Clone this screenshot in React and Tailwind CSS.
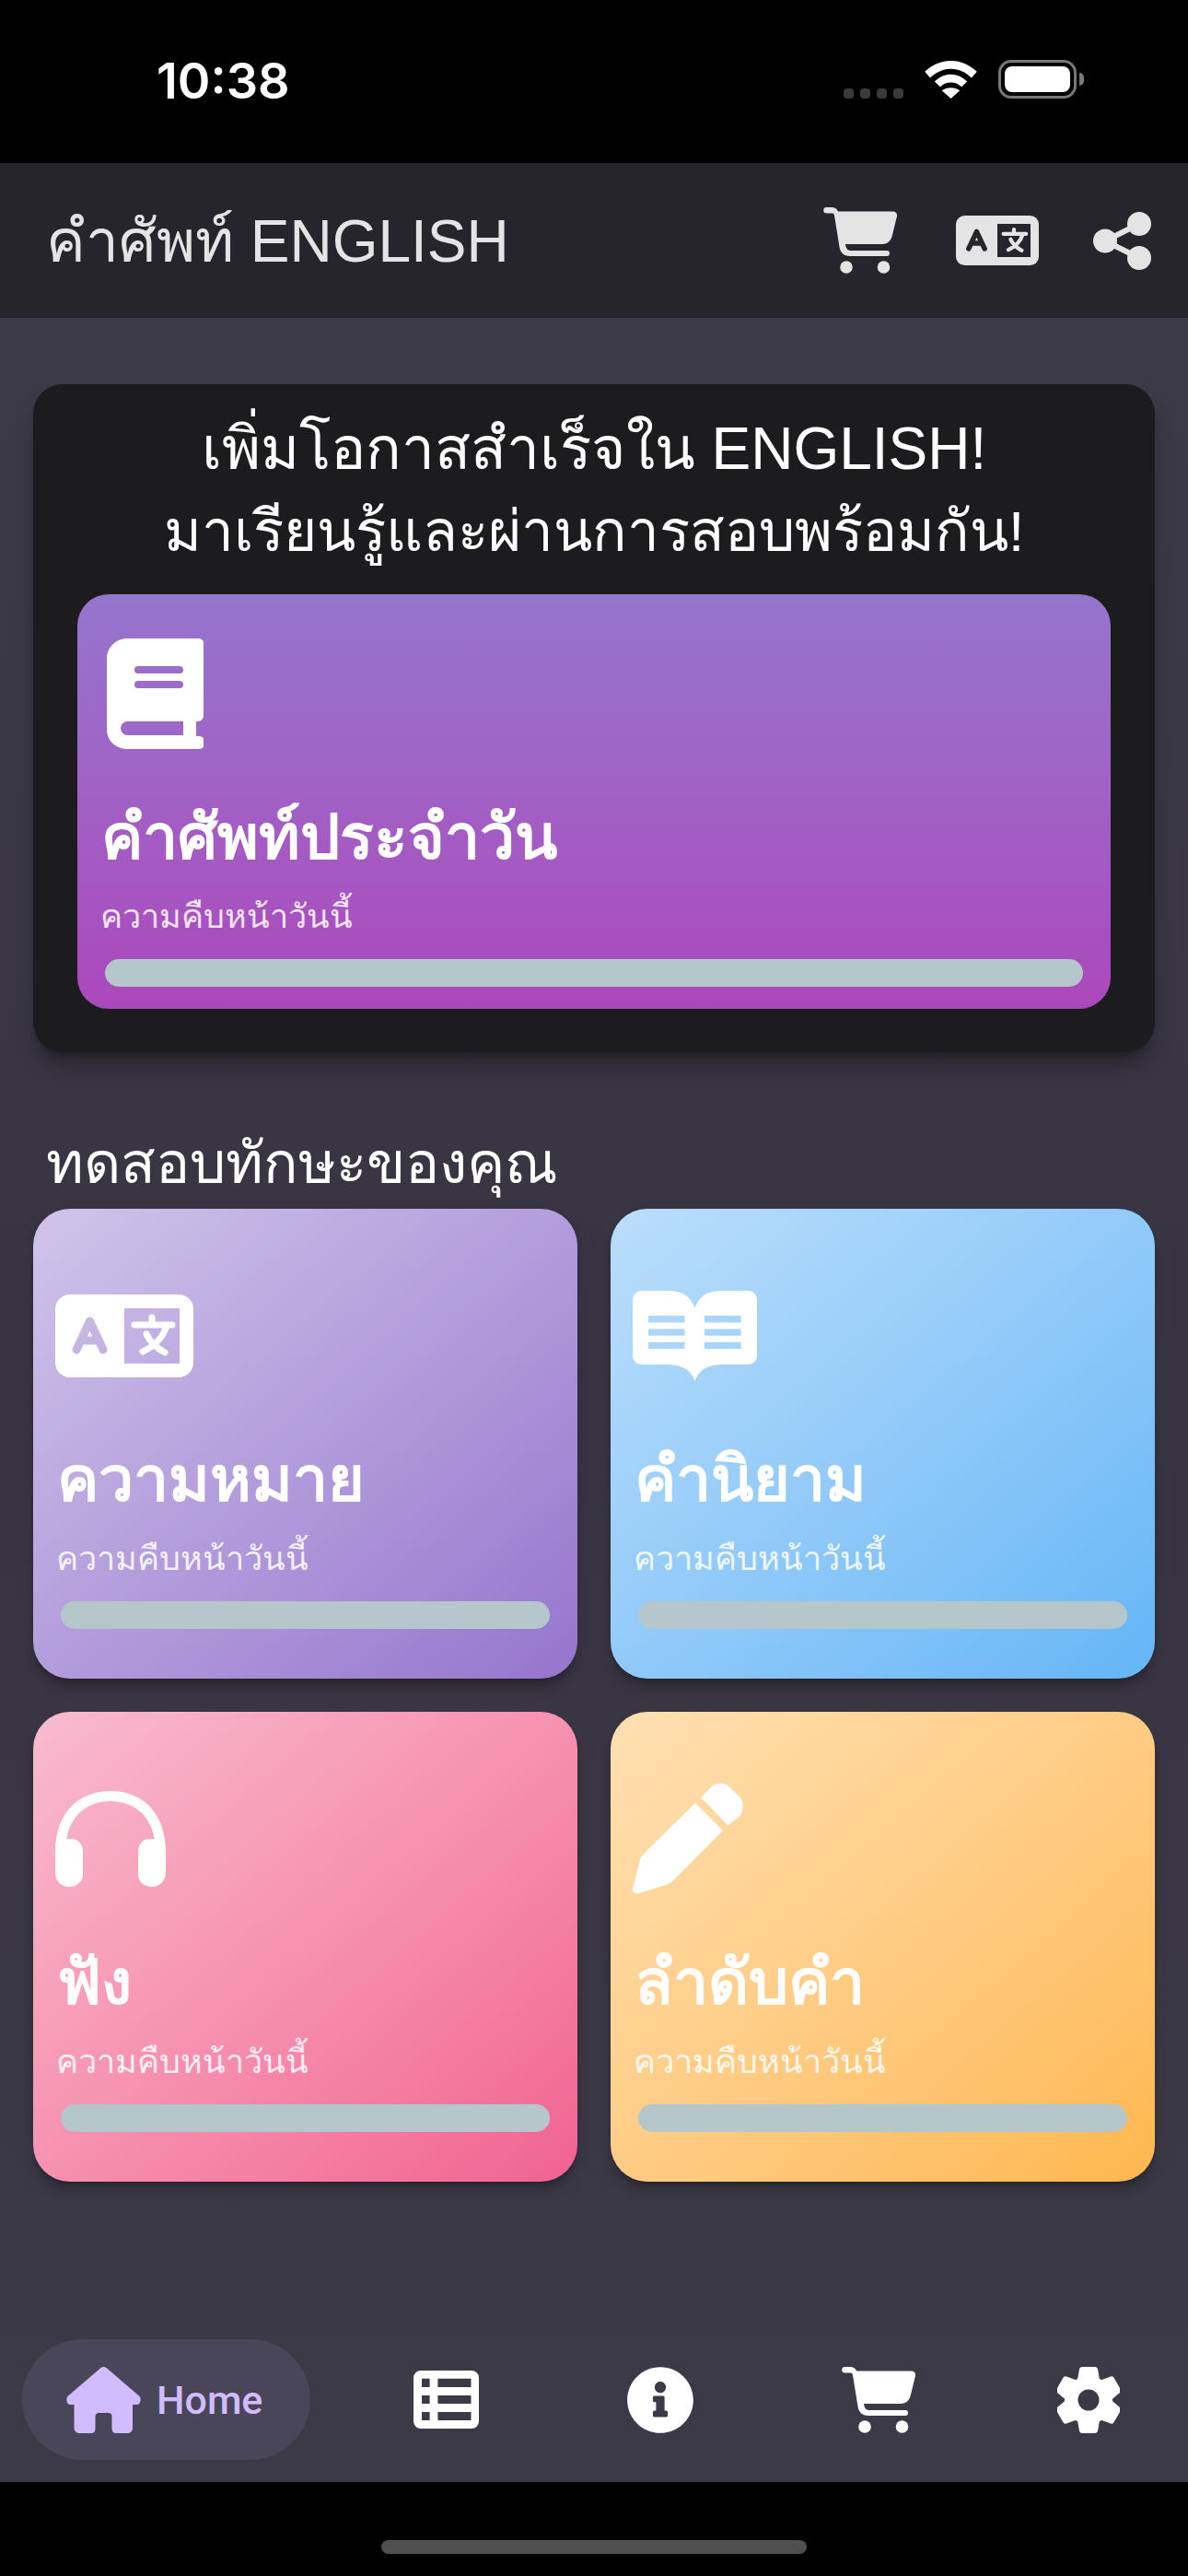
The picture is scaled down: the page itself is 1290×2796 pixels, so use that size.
import React, { useId } from 'react';
import { FaInfoCircle } from 'react-icons/fa';

const FONT = "font-['Liberation_Sans','Noto_Sans',sans-serif]";

function CartIcon({ className }) {
    return (
        <svg viewBox="0 0 80 72" className={className} fill="currentColor">
            <path d="M3.5 0H9C12.5 0 15 1.5 16 4.5H76C78.5 4.5 80.5 7 80 9.5L74.5 32C73 37 69 40 64 40H24C24.5 44 26 47 29.5 47H69A3 3 0 0 1 69 53H29C22 53 18.5 49 17.5 43L12 9C11.7 7 10.5 6.5 9 6.5H3.5A3.25 3.25 0 0 1 3.5 0Z" />
            <circle cx="25" cy="65" r="6.8" />
            <circle cx="65.5" cy="65" r="6.8" />
        </svg>
    );
}

function LanguageIcon({ className }) {
    const id = useId();
    return (
        <svg viewBox="0 0 150 90" className={className} fill="currentColor">
            <mask id={id}>
                <rect width="150" height="90" rx="16" fill="white" />
                <rect x="75" y="15" width="60" height="60" fill="black" />
                <path d="M23 60L37.5 29L52 60M29 50H46" stroke="black" strokeWidth="9" strokeLinecap="round" strokeLinejoin="round" fill="none" />
                <path d="M86 33H127M105 25V33M121 34C117 46 108 56 95 62M99 43C103 52 110 58 119 63" stroke="white" strokeWidth="7" strokeLinecap="round" fill="none" />
            </mask>
            <rect width="150" height="90" mask={`url(#${id})`} />
        </svg>
    );
}

function ShareIcon({ className }) {
    return (
        <svg viewBox="0 0 63 63" className={className} fill="currentColor">
            <circle cx="50" cy="13" r="13" />
            <circle cx="13" cy="31.5" r="13" />
            <circle cx="50" cy="50" r="13" />
            <path d="M50 13L13 31.5L50 50" stroke="currentColor" strokeWidth="6" fill="none" />
        </svg>
    );
}

function ClosedBook() {
    return (
        <svg viewBox="0 0 105 120" className="w-[105px] h-[120px]">
            <path
                fill="white"
                fillRule="evenodd"
                d="M22 0H100A5 5 0 0 1 105 5V84A6 6 0 0 1 99 90H97V106H100A7 7 0 0 1 100 120H24C10 120 0 112 0 98V22C0 10 10 0 22 0ZM15 97.5A7.5 7.5 0 0 0 22.5 105H83V90H22.5A7.5 7.5 0 0 0 15 97.5ZM34 30A4 4 0 0 0 34 38H79A4 4 0 0 0 79 30ZM34 46A4 4 0 0 0 34 54H79A4 4 0 0 0 79 46Z"
            />
        </svg>
    );
}

function OpenBook() {
    return (
        <svg viewBox="0 0 135 98" className="w-[135px] h-[98px]">
            <path
                fill="white"
                fillRule="evenodd"
                d="M10 0H38C56 0 64 8 67.5 19C71 8 79 0 97 0H125C131 0 135 4 135 11V70C135 76 131 80 125 80H100C82 80 72 85 67.5 98C63 85 53 80 35 80H10C4 80 0 76 0 70V11C0 4 4 0 10 0ZM17 27V34.5H56.5V27ZM17 41.5V48.7H56.5V41.5ZM17 55.8V63H56.5V55.8ZM78 27V34.5H117.6V27ZM78 41.5V48.7H117.6V41.5ZM78 55.8V63H117.6V55.8Z"
            />
        </svg>
    );
}

function Headphones() {
    return (
        <svg viewBox="0 0 120 104" className="w-[120px] h-[104px]">
            <path
                fill="white"
                d="M60 0C25 0 0 24 0 66V88C0 98 7 104 15 104C24 104 30 98 30 90V66C30 58 25 52 18 52H12.5C16 26 36 11 60 11C84 11 104 26 107.5 52H102C95 52 90 58 90 66V90C90 98 96 104 105 104C113 104 120 98 120 88V66C120 24 95 0 60 0Z"
            />
        </svg>
    );
}

function Pencil() {
    return (
        <svg viewBox="0 0 120 120" className="w-[120px] h-[120px]">
            <path
                fill="white"
                d="M74 15L87.5 1.5C91 -0.5 100 -1 104 2.5L116 14C121 19 121 30 116 35.5L103.6 45.6ZM68 21L98 50.7L44.5 104.8C42 107 39 109 36 110L6 119C2 120 -1 117 0 114L7.8 83C8.5 80 11 77 14 74Z"
            />
        </svg>
    );
}

function HomeIcon() {
    return (
        <svg viewBox="0 0 81 72" className="w-[81px] h-[72px]" fill="currentColor">
            <path d="M37 1.5C39 -0.5 42 -0.5 44 1.5L79 31.5C82 34 80.5 41 77 41H72V66C72 70 69.5 72 66 72H54C51 72 49.5 70 49.5 67V54C49.5 51.5 48 50 46 50H35C33 50 31.5 51.5 31.5 54V67C31.5 70 30 72 27 72H15C11.5 72 8.5 70 8.5 66V41H4C0.5 41 -1 34 2 31.5Z" />
        </svg>
    );
}

function ListIcon() {
    return (
        <svg viewBox="0 0 71 63" className="w-[71px] h-[63px]">
            <path
                fill="white"
                fillRule="evenodd"
                d="M8 0H63A8 8 0 0 1 71 8V55A8 8 0 0 1 63 63H8A8 8 0 0 1 0 55V8A8 8 0 0 1 8 0ZM9 8.7V18H17.6V8.7ZM26.4 8.7V18H62.5V8.7ZM9 27V36H17.6V27ZM26.4 27V36H62.5V27ZM9 45V54H17.6V45ZM26.4 45V54H62.5V45Z"
            />
        </svg>
    );
}

function GearIcon() {
    return (
        <svg viewBox="-34 -36 68 72" className="ml-[154px] w-[68px] h-[72px]" fill="white">
            {[0, 60, 120, 180, 240, 300].map((angle) => (
                <path key={angle} transform={`rotate(${angle})`} d="M-7 -36H7A3 3 0 0 1 10 -33.5L12 -22H-12L-10 -33.5A3 3 0 0 1 -7 -36Z" />
            ))}
            <circle r="26" />
            <circle r="11.5" fill="#3c3947" />
        </svg>
    );
}

const skills = [
    { title: 'ความหมาย', gradient: 'from-[#d1c4e9] to-[#9575cd]', icon: <LanguageIcon className="w-[150px] h-[90px] text-white" /> },
    { title: 'คำนิยาม', gradient: 'from-[#bbdefb] to-[#64b5f6]', icon: <OpenBook /> },
    { title: 'ฟัง', gradient: 'from-[#f8bbd0] to-[#f06292]', icon: <Headphones /> },
    { title: 'ลำดับคำ', gradient: 'from-[#ffe0b2] to-[#ffb74d]', icon: <Pencil /> },
];

function CardText({ title, barGap }) {
    return (
        <>
            <div className="mt-auto px-[26px] text-[68px] leading-[80px] font-bold text-white">{title}</div>
            <div className="px-[25px] mt-[22px] text-[36px] leading-[50px] text-white/85">ความคืบหน้าวันนี้</div>
            <div className={`mt-[21px] ${barGap}`}>
                <div className="h-[30px] rounded-full bg-[#b6c7cb] mx-[30px]" />
            </div>
        </>
    );
}

function SkillCard({ skill }) {
    return (
        <div className={`h-[510px] rounded-[40px] bg-gradient-to-br ${skill.gradient} shadow-lg shadow-black/30 flex flex-col`}>
            <div className="h-[120px] mt-[78px] pl-[24px] flex items-center">{skill.icon}</div>
            <CardText title={skill.title} barGap="mb-[54px]" />
        </div>
    );
}

export default function App() {
    return (
        <div className={`${FONT} w-[1290px] h-[2796px] bg-black flex flex-col overflow-hidden`}>
            <div className="h-[177px] shrink-0 flex items-start justify-between pl-[170px] pr-[113px] pt-[55px]">
                <span className="text-[54px] leading-[66px] font-semibold text-white font-['Inter',sans-serif]">10:38</span>
                <div className="mt-[10px] h-[42px] flex items-end gap-[23px]">
                    <div className="flex gap-[7px]">
                        <span className="w-[11px] h-[11px] rounded-[4px] bg-[#3a3a3a]" />
                        <span className="w-[11px] h-[11px] rounded-[4px] bg-[#3a3a3a]" />
                        <span className="w-[11px] h-[11px] rounded-[4px] bg-[#3a3a3a]" />
                        <span className="w-[11px] h-[11px] rounded-[4px] bg-[#3a3a3a]" />
                    </div>
                    <svg viewBox="0 0 58 42" className="w-[57px] h-[41px]">
                        <path fill="white" d="M29 0C41 0 50 5 58 12L52 19C46 13 38 9 29 9C20 9 12 13 6 19L0 12C8 5 17 0 29 0ZM29 15C36 15 42 18 47 23L41 29C38 26 34 24 29 24C24 24 20 26 17 29L11 23C16 18 22 15 29 15ZM29 30C33 30 36 31 39 33L29 42L19 33C22 31 25 30 29 30Z" />
                    </svg>
                    <div className="flex items-center gap-[3px]">
                        <div className="w-[85px] h-[42px] rounded-[14px] border-[3px] border-[#777777] p-[4px]">
                            <div className="w-full h-full bg-white rounded-[8px]" />
                        </div>
                        <div className="w-[5px] h-[14px] bg-[#777777] rounded-r-full" />
                    </div>
                </div>
            </div>

            <div className="h-[168px] shrink-0 bg-[#25252b] flex items-center justify-between pl-[50px] pr-[40px]">
                <span className="mt-[2px] text-[64px] leading-[80px] text-[#e4e4e4]">คำศัพท์ ENGLISH</span>
                <div className="flex items-center text-[#e4e4e4]">
                    <CartIcon className="w-[80px] h-[72px]" />
                    <LanguageIcon className="ml-[64px] w-[90px] h-[54px]" />
                    <ShareIcon className="ml-[59px] w-[63px] h-[63px]" />
                </div>
            </div>

            <div className="flex-1 flex flex-col bg-gradient-to-b from-[#3d3a48] via-[#383442] to-[#3d3a48] px-[36px]">
                <div className="mt-[72px] h-[725px] rounded-[32px] bg-[#1c1c1e] shadow-xl shadow-black/30 px-[48px] pt-[25px]">
                    <div className="text-center text-[64px] leading-[90px] text-white">
                        <div>เพิ่มโอกาสสำเร็จใน ENGLISH!</div>
                        <div className="text-[62px]">มาเรียนรู้และผ่านการสอบพร้อมกัน!</div>
                    </div>
                    <div className="mt-[23px] h-[450px] rounded-[34px] bg-gradient-to-b from-[#9575cd] to-[#ab47bc] flex flex-col">
                        <div className="pl-[32px] pt-[48px]">
                            <ClosedBook />
                        </div>
                        <CardText title="คำศัพท์ประจำวัน" barGap="mb-[24px]" />
                    </div>
                </div>

                <div className="mt-[81px] pl-[14px] text-[62px] leading-[80px] text-white">ทดสอบทักษะของคุณ</div>

                <div className="mt-[9px] grid grid-cols-2 gap-[36px]">
                    {skills.map((skill) => (
                        <SkillCard key={skill.title} skill={skill} />
                    ))}
                </div>

                <div className="mt-auto mb-[24px] h-[131px] -mx-[36px] flex items-center pl-[24px]">
                    <div className="w-[313px] h-[131px] shrink-0 rounded-full bg-[#4a4659] flex items-center pl-[48px] gap-[17px] text-[#d1bcff]">
                        <HomeIcon />
                        <span className="text-[43px] leading-[50px] font-medium font-['Roboto',sans-serif]">Home</span>
                    </div>
                    <div className="flex items-center pl-[112px] text-white">
                        <ListIcon />
                        <FaInfoCircle size={74} className="ml-[160px]" />
                        <CartIcon className="ml-[160px] w-[80px] h-[72px]" />
                        <GearIcon />
                    </div>
                </div>
            </div>

            <div className="h-[102px] shrink-0 flex justify-center pt-[63px]">
                <div className="w-[462px] h-[15px] rounded-full bg-[#4f4f4f]" />
            </div>
        </div>
    );
}
